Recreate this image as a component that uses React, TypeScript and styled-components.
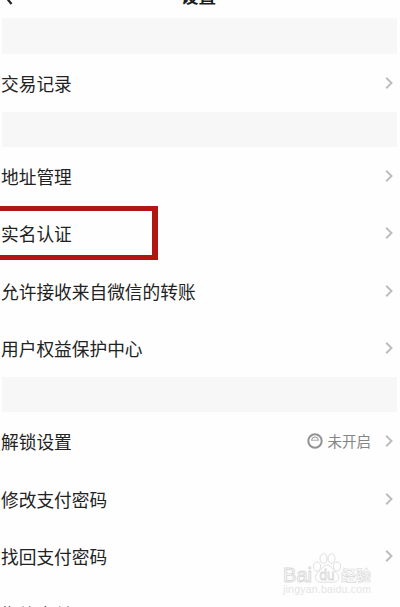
import React from 'react';
import styled, { createGlobalStyle } from 'styled-components';

const GlobalStyle = createGlobalStyle`
  * { box-sizing: border-box; }
  body { margin: 0; background: #fefefe; font-family: "Noto Sans CJK SC", sans-serif; }
`;

const Screen = styled.main`
  position: relative;
  width: 400px;
  height: 607px;
  overflow: hidden;
  background: #fefefe;
`;

const Header = styled.header`
  position: relative;
  display: flex;
  height: 18px;
  align-items: flex-end;
  justify-content: center;
`;

const Title = styled.h1`
  margin: 0 0 12px 0;
  font-size: 17.5px;
  line-height: 20px;
  font-weight: 700;
  color: #1c1c1c;
  padding-right: 3px;
`;

const BackIcon = styled.svg`
  position: absolute;
  left: 3px;
  top: -13px;
`;

const Band = styled.div<{ $height: number }>`
  height: ${(p) => p.$height}px;
  margin: 0 3px 0 2px;
  background: #f7f7f7;
`;

const Group = styled.section<{ $row: number }>`
  display: grid;
  grid-auto-rows: ${(p) => p.$row}px;
`;

const Row = styled.div`
  position: relative;
  display: flex;
  align-items: center;
  padding: 0 6px 0 1px;
`;

const Label = styled.span`
  flex: 1;
  font-size: 17.7px;
  line-height: 26px;
  color: #222;
  white-space: nowrap;
`;

const Status = styled.span`
  display: flex;
  align-items: center;
  gap: 5px;
  margin-right: 13px;
  font-size: 14.5px;
  line-height: 20px;
  color: #858585;
`;

const Highlight = styled.div`
  position: absolute;
  left: -6px;
  top: 1px;
  width: 164px;
  height: 54px;
  border: 5px solid #b21613;
  border-right-width: 6px;
`;

const Watermark = styled.svg`
  position: absolute;
  left: 278px;
  top: 548px;
`;

const Chevron = () => (
  <svg width="10" height="14" viewBox="0 0 10 14" fill="none">
    <path d="M2.200 1.700 7.500 7 2.200 12.300" stroke="#bdbdbd" strokeWidth="2" />
  </svg>
);

const LockBadge = () => (
  <svg width="16" height="16" viewBox="0 0 16 16" fill="none" stroke="#929292">
    <circle cx="8" cy="8" r="6.700" strokeWidth="2" />
    <path d="M4.800 7.500V6.500a3.200 2.500 0 0 1 6.400 0v1" strokeWidth="1" />
    <path d="M4.500 7.200h7" strokeWidth="0.800" />
  </svg>
);

type Item = { label: string; status?: string; highlighted?: boolean };

const groups: { before: number; row: number; items: Item[] }[] = [
  { before: 36, row: 58, items: [{ label: '交易记录' }] },
  {
    before: 35,
    row: 57.5,
    items: [
      { label: '地址管理' },
      { label: '实名认证', highlighted: true },
      { label: '允许接收来自微信的转账' },
      { label: '用户权益保护中心' },
    ],
  },
  {
    before: 35,
    row: 57.7,
    items: [
      { label: '解锁设置', status: '未开启' },
      { label: '修改支付密码' },
      { label: '找回支付密码' },
      { label: '指纹支付' },
    ],
  },
];

export default function App() {
  return (
    <Screen>
      <GlobalStyle />
      <Header>
        <BackIcon width="12" height="20" viewBox="0 0 12 20" fill="none">
          <path d="M9.500 1 2 9l6.500 8" stroke="#222" strokeWidth="2.200" />
        </BackIcon>
        <Title>设置</Title>
      </Header>
      {groups.map((group, i) => (
        <React.Fragment key={i}>
          <Band $height={group.before} />
          <Group $row={group.row}>
            {group.items.map((item) => (
              <Row key={item.label}>
                <Label>{item.label}</Label>
                {item.status && (
                  <Status>
                    <LockBadge />
                    {item.status}
                  </Status>
                )}
                <Chevron />
                {item.highlighted && <Highlight />}
              </Row>
            ))}
          </Group>
        </React.Fragment>
      ))}
      <Watermark width="104" height="52" viewBox="0 0 104 52">
        <g fill="#fff" stroke="#d9d9d9" strokeWidth="0.9" fontFamily="Liberation Sans, sans-serif">
          <text x="5" y="33.500" fontSize="20" textLength="29" lengthAdjust="spacingAndGlyphs">Bai</text>
          <ellipse cx="39" cy="18.500" rx="3.500" ry="4.500" />
          <ellipse cx="45.500" cy="10.500" rx="3.500" ry="4.800" />
          <ellipse cx="53.500" cy="10.500" rx="3.500" ry="4.800" />
          <ellipse cx="59" cy="18.500" rx="3.500" ry="4.500" />
          <path d="M49 17c-4 0-5 4-8 6.500-3 2.500-4.500 5-3 8 1.800 3.800 6.500 2.500 11 2.500s9.500 1.300 11.300-2.500c1.400-3-.5-5.500-3.300-8-3-2.500-4-6.500-8-6.500Z" />
          <text x="41.500" y="32" fontSize="14" textLength="15" lengthAdjust="spacingAndGlyphs" strokeWidth="0.8">du</text>
          <text x="63" y="32.500" fontSize="15" fontWeight="bold" fontFamily="Noto Sans CJK SC, sans-serif" strokeWidth="0.6">经验</text>
        </g>
        <text x="5" y="45" fontSize="10.500" fill="#e4e4e4" fontFamily="Liberation Sans, sans-serif" textLength="88">jingyan.baidu.com</text>
      </Watermark>
    </Screen>
  );
}
